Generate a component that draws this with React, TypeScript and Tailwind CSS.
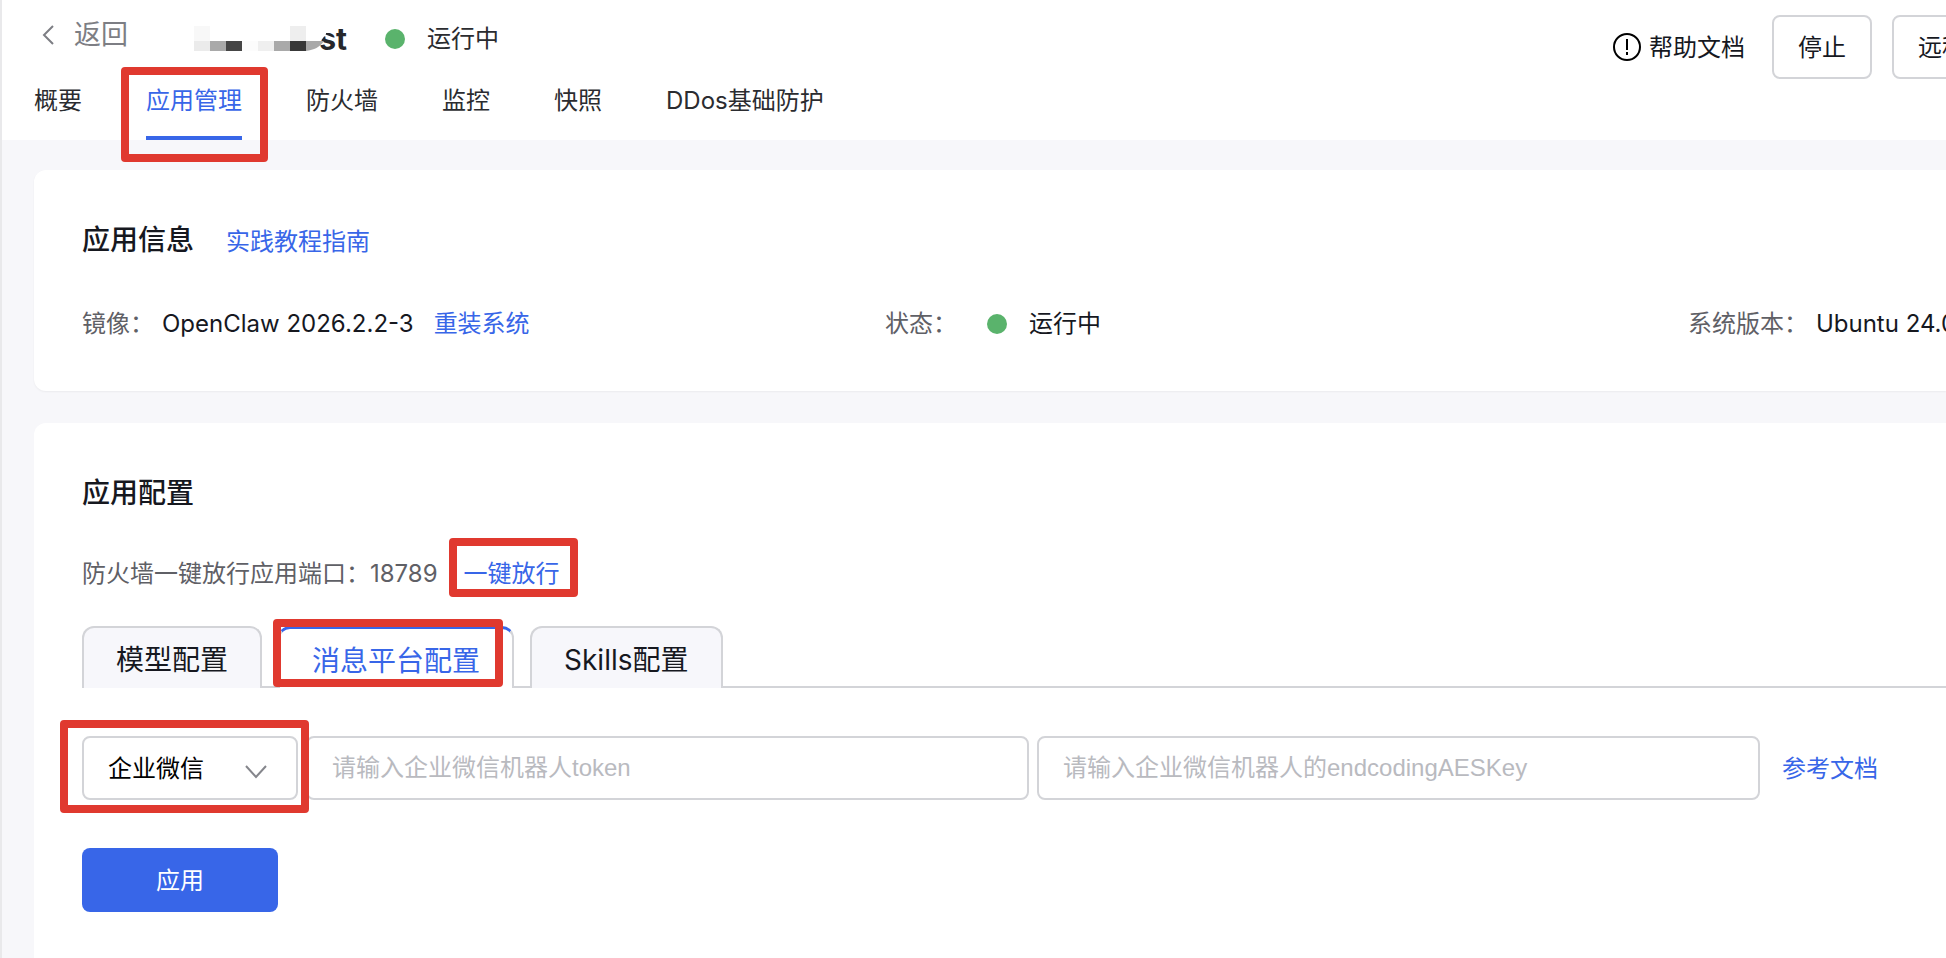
import { ReactNode, useState } from 'react'

const navTabs = ['概要', '应用管理', '防火墙', '监控', '快照', 'DDos基础防护']
const configTabs = ['模型配置', '消息平台配置', 'Skills配置']

function Highlight({ className }: { className: string }) {
  return (
    <span
      aria-hidden="true"
      className={`pointer-events-none absolute z-10 rounded border-8 border-[#e0392f] ${className}`}
    />
  )
}

function StatusDot() {
  return <span className="mx-[22px] size-5 shrink-0 rounded-full bg-[#5ab36c]" />
}

function InfoItem({ label, children }: { label: string; children: ReactNode }) {
  return (
    <div className="flex min-w-0 items-center whitespace-nowrap">
      <dt className="mr-2 text-[#5f6066]">{label}：</dt>
      <dd className="flex items-center">{children}</dd>
    </div>
  )
}

function MaskedName() {
  return (
    <h1 className="relative flex h-11 w-[153px] items-center justify-end text-[30px] leading-11 font-bold text-[#26272b]">
      st
      <svg className="absolute inset-0 h-11 w-[153px]" viewBox="0 1 153 44">
        <path d="M112 10h20v8l-6 8h-14z" fill="#fff" />
        <path d="m130 19 10 4" stroke="#fff" strokeWidth="2" />
        <path d="M112 25h18c-4 6-10 9-18 10z" fill="#a9a9a9" />
        <g shapeRendering="crispEdges">
          <rect x="0" y="10" width="16" height="15" fill="#f8f8f8" />
          <rect x="0" y="25" width="16" height="10" fill="#ebebeb" />
          <rect x="16" y="25" width="16" height="10" fill="#a9a9a9" />
          <rect x="32" y="25" width="16" height="10" fill="#454545" />
          <rect x="48" y="25" width="16" height="10" fill="#fcfcfc" />
          <rect x="64" y="25" width="16" height="10" fill="#efefef" />
          <rect x="80" y="25" width="16" height="10" fill="#a9a9a9" />
          <rect x="96" y="10" width="16" height="15" fill="#eeeeee" />
          <rect x="96" y="25" width="16" height="10" fill="#383838" />
        </g>
      </svg>
    </h1>
  )
}

export default function App() {
  const [activeNav, setActiveNav] = useState('应用管理')
  const [activeTab, setActiveTab] = useState('消息平台配置')
  const [platform, setPlatform] = useState('企业微信')

  return (
    <div className="flex min-h-screen flex-col overflow-hidden border-l-2 border-[#e9e9eb] bg-[#f7f7fa] font-['Inter','Noto_Sans_CJK_SC',sans-serif] text-2xl leading-8 text-[#16181f]">
      {/* Header */}
      <header className="flex items-start justify-between bg-white pl-8">
        <div className="pt-[17px]">
          <div className="flex items-start">
            <a href="#" className="flex h-9 items-center text-[27px] text-[#7d7e84]">
              <svg className="ml-2 mr-5 h-5 w-3" viewBox="0 0 12 20" fill="none" stroke="currentColor" strokeWidth="2">
                <path d="M11 1 2 10l9 9" />
              </svg>
              返回
            </a>
            <div className="ml-[66px] flex h-11 items-center text-[#2b2c30]">
              <MaskedName />
              <span className="ml-4 flex items-center">
                <StatusDot />
                运行中
              </span>
            </div>
          </div>
          <nav className="mt-6 flex gap-16">
            {navTabs.map((tab) => (
              <button
                key={tab}
                type="button"
                onClick={() => setActiveNav(tab)}
                className={`relative whitespace-nowrap border-b-4 pb-[19px] ${
                  tab === activeNav ? 'border-[#3866e8] text-[#3866e8]' : 'border-transparent text-[#2b2c30]'
                }`}
              >
                {tab}
                {tab === '应用管理' && <Highlight className="-top-[18px] -right-[26px] -bottom-[26px] -left-[25px]" />}
              </button>
            ))}
          </nav>
        </div>

        <div className="flex w-[333px] shrink-0 items-center pt-[15px] whitespace-nowrap">
          <a href="#" className="flex shrink-0 items-center gap-2">
            <svg className="size-7" viewBox="0 0 28 28" fill="none" stroke="#000" strokeWidth="2">
              <circle cx="14" cy="14" r="13" />
              <path d="M14 6v11M14 19v3" />
            </svg>
            <span className="pt-0.5">帮助文档</span>
          </a>
          <button type="button" className="ml-[27px] h-16 shrink-0 rounded-lg border-2 border-[#d3d4d8] px-6 pt-0.5">
            停止
          </button>
          <button type="button" className="ml-5 h-16 shrink-0 rounded-lg border-2 border-[#d3d4d8] px-6 pt-0.5">
            远程登录
          </button>
        </div>
      </header>

      <main className="flex grow flex-col gap-8 pt-[30px] pl-8">
        {/* App info */}
        <section className="rounded-l-xl bg-white pt-12 pb-[51px] pl-12 shadow-xs">
          <div className="flex items-baseline">
            <h2 className="text-[28px] leading-11 font-medium">应用信息</h2>
            <a href="#" className="ml-8 text-[#3866e8]">实践教程指南</a>
          </div>
          <dl className="mt-[46px] grid grid-cols-[56fr_56fr_18fr]">
            <InfoItem label="镜像">
              OpenClaw 2026.2.2-3
              <a href="#" className="ml-5 text-[#3866e8]">重装系统</a>
            </InfoItem>
            <InfoItem label="状态">
              <StatusDot />
              运行中
            </InfoItem>
            <InfoItem label="系统版本">Ubuntu 24.04</InfoItem>
          </dl>
        </section>

        {/* App config */}
        <section className="grow rounded-tl-xl bg-white pt-12 pl-12">
          <h2 className="text-[28px] leading-11 font-medium">应用配置</h2>
          <p className="mt-[43px] flex items-center text-[#5f6066]">
            防火墙一键放行应用端口：18789
            <a href="#" className="relative ml-[26px] text-[#3866e8]">
              一键放行
              <Highlight className="-top-5 -right-[18px] -bottom-[7px] -left-[15px]" />
            </a>
          </p>

          <div className="mt-9 flex gap-4 border-b-2 border-[#d3d4d8] text-[28px]" role="tablist">
            {configTabs.map((tab) => (
              <button
                key={tab}
                type="button"
                role="tab"
                aria-selected={tab === activeTab}
                onClick={() => setActiveTab(tab)}
                className={`relative -mb-0.5 h-[62px] rounded-t-xl border-2 border-b-0 border-[#d3d4d8] px-8 pt-1 ${
                  tab === activeTab ? 'border-t-3 border-t-[#3866e8] bg-white text-[#3866e8]' : 'bg-[#f7f7fb]'
                }`}
              >
                {tab}
                {tab === '消息平台配置' && <Highlight className="-top-[10px] right-[9px] bottom-px -left-[7px]" />}
              </button>
            ))}
          </div>

          <form onSubmit={(e) => e.preventDefault()}>
            <div className="mt-12 flex items-center gap-2 pr-[68px]">
              <div className="relative w-[216px] shrink-0">
                <select
                  aria-label="消息平台"
                  value={platform}
                  onChange={(e) => setPlatform(e.target.value)}
                  className="block h-16 w-full appearance-none rounded-lg border-2 border-[#d3d4d8] bg-white px-6 pt-0.5 text-black"
                >
                  <option>企业微信</option>
                </select>
                <svg
                  className="pointer-events-none absolute top-7 right-[30px] h-4 w-6"
                  viewBox="0 0 24 16"
                  fill="none"
                  stroke="#85868c"
                  strokeWidth="2"
                >
                  <path d="m2 2 10 11L22 2" />
                </svg>
                <Highlight className="-top-4 -right-[11px] -bottom-[13px] -left-[22px]" />
              </div>
              <input
                type="text"
                aria-label="token"
                placeholder="请输入企业微信机器人token"
                className="h-16 min-w-0 flex-1 rounded-lg border-2 border-[#d3d4d8] px-6 font-['Liberation_Sans','Noto_Sans_CJK_SC',sans-serif] placeholder:text-[#b9babf]"
              />
              <input
                type="text"
                aria-label="endcodingAESKey"
                placeholder="请输入企业微信机器人的endcodingAESKey"
                className="h-16 min-w-0 flex-1 rounded-lg border-2 border-[#d3d4d8] px-6 font-['Liberation_Sans','Noto_Sans_CJK_SC',sans-serif] placeholder:text-[#b9babf]"
              />
              <a href="#" className="ml-[14px] shrink-0 pt-0.5 text-[#3866e8]">参考文档</a>
            </div>
            <button type="submit" className="mt-12 h-16 w-[196px] rounded-lg bg-[#3866e8] pt-0.5 text-white">
              应用
            </button>
          </form>
        </section>
      </main>
    </div>
  )
}
